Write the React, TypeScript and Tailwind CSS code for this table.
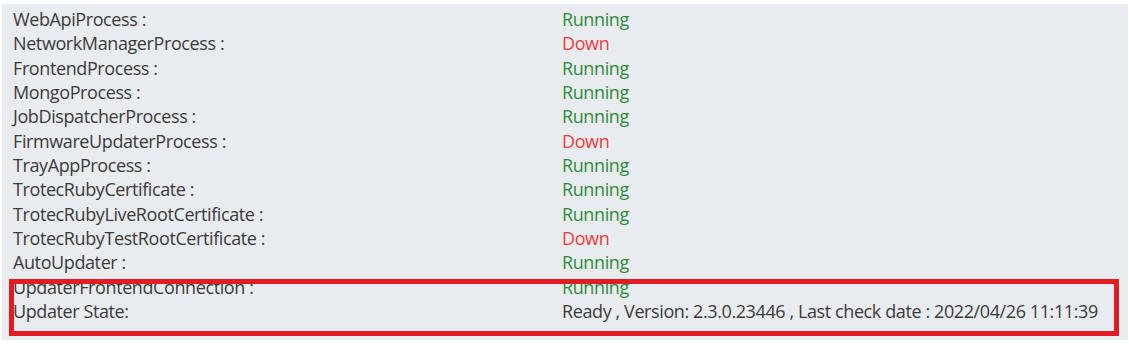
import React from "react";

const rows: [string, string][] = [
  ["WebApiProcess :", "Running"],
  ["NetworkManagerProcess :", "Down"],
  ["FrontendProcess :", "Running"],
  ["MongoProcess :", "Running"],
  ["JobDispatcherProcess :", "Running"],
  ["FirmwareUpdaterProcess :", "Down"],
  ["TrayAppProcess :", "Running"],
  ["TrotecRubyCertificate :", "Running"],
  ["TrotecRubyLiveRootCertificate :", "Running"],
  ["TrotecRubyTestRootCertificate :", "Down"],
  ["AutoUpdater :", "Running"],
  ["UpdaterFrontendConnection :", "Running"],
];

export default function App() {
  return (
    <div className="w-[1129px] h-[344px] bg-white pt-[4px] pl-[2px] pr-[1px] font-['Open_Sans',sans-serif]">
      <div className="relative h-[336px] bg-[#e9ecef] pt-[3px] pl-[11px] text-[18px] tracking-[-0.4px] text-[#3b3b3b]">
        {rows.map(([k, v]) => (
          <div key={k} className="flex h-[24.34px] items-center leading-none">
            <div className="w-[549px]">{k}</div>
            <div className={v === "Down" ? "text-[#ef3b3b]" : "text-[#2e8b3a]"}>{v}</div>
          </div>
        ))}
        <div className="flex h-[24.34px] items-center leading-none">
          <div className="w-[549px]">Updater State:</div>
          <div>Ready , Version: 2.3.0.23446 , Last check date : 2022/04/26 11:11:39</div>
        </div>
        <div className="absolute left-[7px] top-[275px] w-[1110px] h-[57px] border-[5px] border-[#e31b23]" />
      </div>
    </div>
  );
}
